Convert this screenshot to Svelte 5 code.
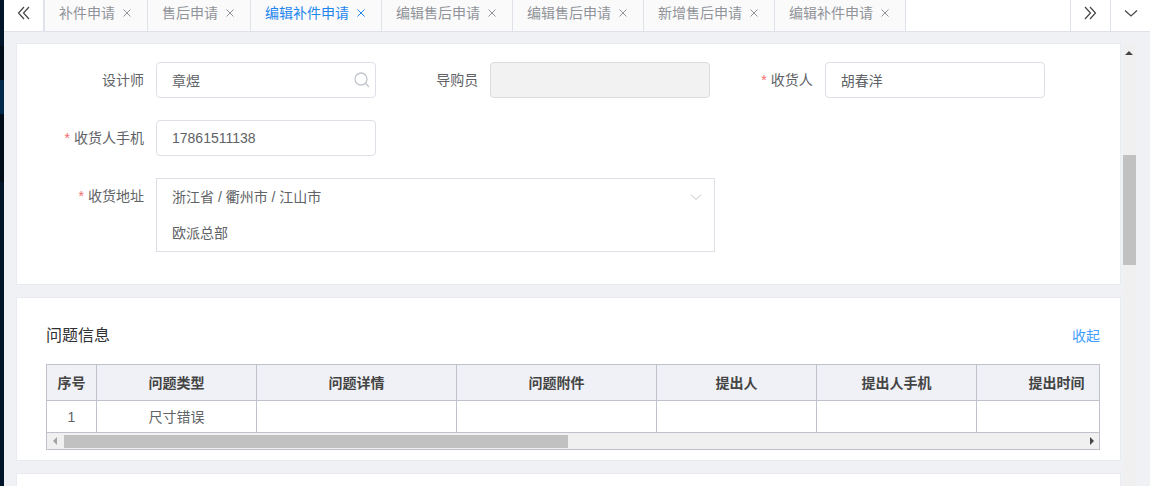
<script lang="ts">
	type Tab = { id: number; title: string };

	type Column = { title: string; width: number };

	let tabs: Tab[] = $state([
		{ id: 1, title: '补件申请' },
		{ id: 2, title: '售后申请' },
		{ id: 3, title: '编辑补件申请' },
		{ id: 4, title: '编辑售后申请' },
		{ id: 5, title: '编辑售后申请' },
		{ id: 6, title: '新增售后申请' },
		{ id: 7, title: '编辑补件申请' }
	]);

	const columns: Column[] = [
		{ title: '序号', width: 50 },
		{ title: '问题类型', width: 160 },
		{ title: '问题详情', width: 200 },
		{ title: '问题附件', width: 200 },
		{ title: '提出人', width: 160 },
		{ title: '提出人手机', width: 160 },
		{ title: '提出时间', width: 160 }
	];

	const rows = [['1', '尺寸错误', '', '', '', '', '']];

	const regions = ['浙江省 / 衢州市 / 江山市'];

	let activeTab = $state(3);
	let expanded = $state(true);
	let form = $state({
		designer: '章煜',
		guide: '',
		receiver: '胡春洋',
		phone: '17861511138',
		region: regions[0],
		address: '欧派总部'
	});

	function closeTab(id: number) {
		tabs = tabs.filter((t) => t.id !== id);
	}

	function step(offset: number) {
		const index = tabs.findIndex((t) => t.id === activeTab) + offset;
		if (tabs[index]) activeTab = tabs[index].id;
	}
</script>

<div class="layout">
	<div class="sidebar">
		<div class="menu-group"></div>
		<div class="menu-item"></div>
		<div class="menu-item active"></div>
		<div class="menu-item"></div>
		<div class="menu-item"></div>
	</div>

	<div class="main">
		<nav class="tabbar">
			<button class="tool prev" aria-label="上一个" onclick={() => step(-1)}>
				<svg width="14" height="14" viewBox="0 0 14 14">
					<path d="M7 1 1.500 7 7 13M12 1 6.500 7 12 13" />
				</svg>
			</button>
			<div class="tabs">
				{#each tabs as tab (tab.id)}
					<div class="tab" class:active={tab.id === activeTab}>
						<button class="tab-title" onclick={() => (activeTab = tab.id)}>{tab.title}</button>
						<button class="tab-close" aria-label="关闭" onclick={() => closeTab(tab.id)}>
							<svg width="8" height="8" viewBox="0 0 8 8"><path d="M.5.5l7 7M7.500.5l-7 7" /></svg>
						</button>
					</div>
				{/each}
			</div>
			<button class="tool" aria-label="下一个" onclick={() => step(1)}>
				<svg width="14" height="14" viewBox="0 0 14 14">
					<path d="M1 1l5.500 6L1 13M6 1l5.500 6L6 13" />
				</svg>
			</button>
			<button class="tool" aria-label="更多">
				<svg width="14" height="14" viewBox="0 0 14 14"><path d="M1 4.500l6 5.500 6-5.500" /></svg>
			</button>
		</nav>

		<div class="page">
			<div class="content">
				<section class="card">
					<form class="form">
						<div class="field">
							<label for="designer">设计师</label>
							<div class="control">
								<input id="designer" type="text" bind:value={form.designer} />
								<svg class="search" width="16" height="16" viewBox="0 0 16 16">
									<circle cx="7" cy="7" r="6" />
									<path d="M11.500 11.500 15 15" />
								</svg>
							</div>
						</div>
						<div class="field">
							<label for="guide">导购员</label>
							<div class="control">
								<input id="guide" type="text" bind:value={form.guide} disabled />
							</div>
						</div>
						<div class="field required">
							<label for="receiver">收货人</label>
							<div class="control">
								<input id="receiver" type="text" bind:value={form.receiver} />
							</div>
						</div>
						<div class="field required phone">
							<label for="phone">收货人手机</label>
							<div class="control">
								<input id="phone" type="text" bind:value={form.phone} />
							</div>
						</div>
						<div class="field required wide">
							<label for="region">收货地址</label>
							<div class="address">
								<select id="region" bind:value={form.region}>
									{#each regions as region}
										<option value={region}>{region}</option>
									{/each}
								</select>
								<svg class="arrow" width="12" height="12" viewBox="0 0 12 12">
									<path d="M1 3.500l5 5 5-5" />
								</svg>
								<textarea rows="1" aria-label="详细地址" bind:value={form.address}></textarea>
							</div>
						</div>
					</form>
				</section>

				<section class="card problems">
					<header>
						<h2>问题信息</h2>
						<button class="toggle" onclick={() => (expanded = !expanded)}>
							{expanded ? '收起' : '展开'}
						</button>
					</header>
					{#if expanded}
						<div class="table-box">
							<div class="table-view">
								<table>
									<colgroup>
										{#each columns as column}
											<col style="width: {column.width}px" />
										{/each}
									</colgroup>
									<thead>
										<tr>
											{#each columns as column}
												<th>{column.title}</th>
											{/each}
										</tr>
									</thead>
									<tbody>
										{#each rows as row}
											<tr>
												{#each row as cell}
													<td>{cell}</td>
												{/each}
											</tr>
										{/each}
									</tbody>
								</table>
							</div>
							<div class="hscroll">
								<svg width="17" height="16" viewBox="0 0 17 16"><path class="off" d="M10 4v8L6 8z" /></svg>
								<div class="htrack"><div class="hthumb"></div></div>
								<svg width="17" height="16" viewBox="0 0 17 16"><path d="M8 4v8l4-4z" /></svg>
							</div>
						</div>
					{/if}
				</section>

				<section class="card next"></section>
			</div>

			<div class="vscroll">
				<svg width="13" height="20" viewBox="0 0 13 20"><path d="M2 12h8L6 8z" /></svg>
				<div class="vthumb"></div>
			</div>
		</div>
	</div>
</div>

<style>
	:global(body) {
		margin: 0;
		background: #f0f1f5;
	}

	.layout {
		display: flex;
		height: 100vh;
		overflow: hidden;
		font-family: 'Liberation Sans', 'Noto Sans CJK SC', sans-serif;
		font-size: 14px;
		color: #606266;
		background: #f0f1f5;
	}

	button,
	input,
	select,
	textarea {
		font: inherit;
		color: inherit;
		box-sizing: border-box;
		margin: 0;
	}

	button {
		padding: 0;
		border: none;
		background: none;
		cursor: pointer;
	}

	svg {
		display: block;
		flex: none;
		fill: none;
		stroke: currentColor;
	}

	/* sidebar */
	.sidebar {
		flex: none;
		width: 4px;
		background: #001529;
	}

	.menu-group {
		height: 46px;
	}

	.menu-item {
		height: 34px;
		background: #000c17;
	}

	.menu-item.active {
		background: #00284d;
	}

	.main {
		flex: 1;
		min-width: 0;
		display: flex;
		flex-direction: column;
	}

	/* tab bar */
	.tabbar {
		flex: none;
		display: flex;
		background: #fff;
		border-bottom: 1px solid #e0e2ea;
	}

	.tool {
		flex: none;
		display: flex;
		justify-content: center;
		width: 40px;
		padding: 6px 0 11px;
		border-left: 1px solid #e0e2ea;
		color: #444;
	}

	.tool.prev {
		width: 41px;
		border-left: none;
		border-right: 2px solid #e0e2ea;
	}

	.tool svg {
		stroke-width: 1.2;
	}

	.tabs {
		flex: 1;
		min-width: 0;
		display: flex;
		overflow: hidden;
	}

	.tab {
		flex: none;
		display: flex;
		align-items: center;
		gap: 8px;
		padding: 3px 16px 8px 14px;
		border-right: 1px solid #e0e2ea;
		background: #fafafa;
		color: #909399;
	}

	.tab.active {
		color: #1f86ee;
	}

	.tab-title {
		line-height: 20px;
	}

	/* form card */
	.page {
		flex: 1;
		min-height: 0;
		display: flex;
		gap: 2px;
		padding: 11px 14px 0 12px;
	}

	.content {
		flex: 1;
		min-width: 0;
		display: flex;
		flex-direction: column;
		gap: 12px;
	}

	.card {
		flex: none;
		padding: 18px 20px 32px 29px;
		border: 1px solid #e9ebf2;
		background: #fff;
	}

	.form {
		display: grid;
		grid-template-columns: repeat(3, 1fr);
		gap: 22px 0;
		padding-right: 51px;
	}

	.field {
		display: flex;
		min-width: 0;
	}

	.field label {
		flex: none;
		box-sizing: border-box;
		width: 110px;
		padding-right: 12px;
		line-height: 36px;
		text-align: right;
	}

	.required label::before {
		content: '*';
		margin-right: 4px;
		color: #f56c6c;
	}

	.phone {
		grid-column: 1;
	}

	.wide {
		grid-column: 1 / span 2;
	}

	.control {
		position: relative;
		flex: 1;
		min-width: 0;
		max-width: 220px;
	}

	.control input {
		display: block;
		width: 100%;
		height: 36px;
		padding: 0 15px;
		border: 1px solid #dcdfe6;
		border-radius: 4px;
		background: #fff;
		outline: none;
	}

	.control input:focus {
		border-color: #409eff;
	}

	.control input:disabled {
		border-color: #dcdcdc;
		background: #f2f2f2;
	}

	.search {
		position: absolute;
		top: 10px;
		right: 6px;
		color: #c0c4cc;
		stroke-width: 1.3;
	}

	.address {
		position: relative;
		flex: 1;
		min-width: 0;
		border: 1px solid #dcdfe6;
	}

	.address select,
	.address textarea {
		display: block;
		width: 100%;
		height: 36px;
		padding: 0 15px;
		border: none;
		background: none;
		outline: none;
		line-height: 36px;
		appearance: none;
		resize: none;
		overflow: hidden;
	}

	.arrow {
		position: absolute;
		top: 12px;
		right: 12px;
		color: #c0c4cc;
		pointer-events: none;
	}

	/* problem table */
	.problems {
		padding-top: 26px;
		padding-bottom: 10px;
	}

	header {
		display: flex;
		align-items: center;
		justify-content: space-between;
		margin-bottom: 16px;
	}

	h2 {
		margin: 0;
		font-size: 16px;
		font-weight: normal;
		line-height: 24px;
		color: #303133;
	}

	.toggle {
		color: #409eff;
		line-height: 22px;
	}

	.table-box {
		border: 1px solid #c0c2cb;
	}

	.table-view {
		overflow: hidden;
	}

	table {
		width: 1090px;
		table-layout: fixed;
		border-collapse: separate;
		border-spacing: 0;
	}

	th,
	td {
		box-sizing: border-box;
		height: 32px;
		padding: 0;
		border-right: 1px solid #c0c2cb;
		border-bottom: 1px solid #c0c2cb;
		text-align: center;
		line-height: 20px;
	}

	th {
		height: 36px;
		background: #eff1f6;
		color: #444;
		font-weight: bold;
	}

	/* scrollbars */
	.hscroll {
		display: flex;
		align-items: center;
		height: 16px;
		background: #f0f0f0;
	}

	.htrack {
		flex: 1;
	}

	.hthumb {
		width: 49.5%;
		height: 13px;
		background: #c1c1c1;
	}

	.hscroll path,
	.vscroll path {
		fill: #444;
		stroke: none;
	}

	.hscroll .off {
		fill: #a3a3a3;
	}

	.next {
		flex: 1 0 40px;
	}

	.vscroll {
		flex: none;
		width: 13px;
		background: #f0f0f0;
	}

	.vthumb {
		height: 110px;
		margin-top: 92px;
		background: #c1c1c1;
	}
</style>
